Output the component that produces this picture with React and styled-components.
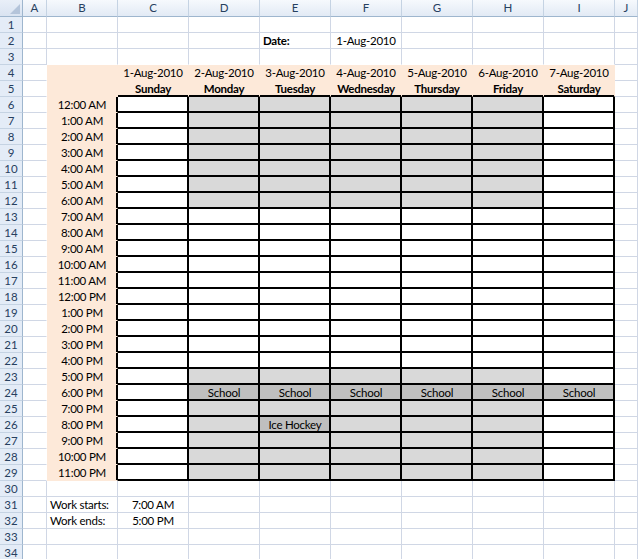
import React from 'react';
import styled, {createGlobalStyle} from 'styled-components';

const GRID = '#d0d7e5'
const PEACH = '#fde9d9'
const GRAY = '#d9d9d9'
const DARK = '#bfbfbf'
const HEAD_LINE = '#9eb6ce'

const GlobalStyle = createGlobalStyle`
  html, body {
    margin: 0;
    padding: 0;
    background: #fff;
    overflow: hidden;
  }
  body {
    font-family: Lato, "Liberation Sans", sans-serif;
  }
`

const Sheet = styled.div`
  display: grid;
  grid-template-columns: 23px 24px repeat(8, 71px) 1fr;
  grid-template-rows: 17px repeat(34, 16px);
  width: 638px;
  height: 559px;
  overflow: hidden;
  font-size: 11.5px;
  letter-spacing: -0.25px;
  color: #000;
`
const Corner = styled.div`
  box-sizing: border-box;
  display: flex;
  align-items: flex-end;
  justify-content: flex-end;
  padding: 0 2px 2px 0;
  background: linear-gradient(#e9eff8, #d9e3f1);
  border-right: 1px solid ${HEAD_LINE};
  border-bottom: 1px solid ${HEAD_LINE};
`
const ColHead = styled.div`
  box-sizing: border-box;
  background: linear-gradient(#f6f9fd, #e2eaf5);
  border-right: 1px solid #c5d3e3;
  border-bottom: 1px solid ${HEAD_LINE};
  color: #27405f;
  text-align: center;
  line-height: 16px;
  letter-spacing: 0;
`
const RowHead = styled.div`
  box-sizing: border-box;
  background: #e4ecf7;
  border-right: 1px solid ${HEAD_LINE};
  border-bottom: 1px solid #c5d3e3;
  color: #27405f;
  text-align: center;
  line-height: 15px;
  letter-spacing: 0;
`
const Cell = styled.div`
  box-sizing: border-box;
  padding: 0 3px;
  line-height: 15px;
  white-space: nowrap;
  overflow: hidden;
  background: ${p => p.$fill};
  border-right: 1px solid ${p => p.$right};
  border-bottom: 1px solid ${p => p.$bottom};
  box-shadow: ${p => p.$shadow};
  text-align: ${p => p.$align};
  font-weight: ${p => (p.$bold ? 700 : 400)};
`

const dates = ['1-Aug-2010', '2-Aug-2010', '3-Aug-2010', '4-Aug-2010', '5-Aug-2010', '6-Aug-2010', '7-Aug-2010']
const days = ['Sunday', 'Monday', 'Tuesday', 'Wednesday', 'Thursday', 'Friday', 'Saturday']
const COLS = ['A', 'B', 'C', 'D', 'E', 'F', 'G', 'H', 'I', 'J']

const boxed = (r, c) => r >= 6 && r <= 29 && c >= 2 && c <= 8

const timeLabel = r => {
  const h = r - 6
  return `${h % 12 || 12}:00 ${h < 12 ? 'AM' : 'PM'}`
}

// what each cell holds: fill, text, alignment, weight
const cellInfo = (r, c) => {
  let fill = null, text = '', align = 'left', bold = false
  if ((r === 4 || r === 5) && c >= 1 && c <= 8) fill = PEACH
  if (r >= 6 && r <= 29 && c === 1) {
    fill = PEACH
    text = timeLabel(r)
    align = 'center'
  }
  if (r === 4 && c >= 2 && c <= 8) { text = dates[c - 2]; align = 'center' }
  if (r === 5 && c >= 2 && c <= 8) { text = days[c - 2]; align = 'center'; bold = true }
  if (r === 2 && c === 4) { text = 'Date:'; bold = true }
  if (r === 2 && c === 5) { text = '1-Aug-2010'; align = 'center' }
  if (r === 31 && c === 1) text = 'Work starts:'
  if (r === 32 && c === 1) text = 'Work ends:'
  if (r === 31 && c === 2) { text = '7:00 AM'; align = 'center' }
  if (r === 32 && c === 2) { text = '5:00 PM'; align = 'center' }
  if (boxed(r, c)) {
    if (r === 24 && c >= 3) {
      fill = DARK
      text = 'School'
      align = 'center'
    } else if (r === 26 && c === 4) {
      fill = DARK
      text = 'Ice Hockey'
      align = 'center'
    } else if (c >= 3 && c <= 7 && ((r >= 6 && r <= 12) || (r >= 23 && r <= 29))) {
      fill = GRAY
    }
  }
  return {fill, text, align, bold}
}

const lineColor = (own, other, black) => {
  if (black) return '#000'
  if (own) return own
  if (other) return '#fff'
  return GRID
}

const renderCell = (r, c) => {
  const info = cellInfo(r, c)
  const rightBlack = boxed(r, c) || boxed(r, c + 1)
  const bottomBlack = boxed(r, c) || boxed(r + 1, c)
  const shadows = []
  if (rightBlack) shadows.push('inset -1px 0 0 #000')
  if (bottomBlack) shadows.push('inset 0 -1px 0 #000')
  return (
    <Cell
      key={`${r}-${c}`}
      $fill={info.fill || '#fff'}
      $right={lineColor(info.fill, cellInfo(r, c + 1).fill, rightBlack)}
      $bottom={lineColor(info.fill, cellInfo(r + 1, c).fill, bottomBlack)}
      $shadow={shadows.length ? shadows.join(', ') : 'none'}
      $align={info.align}
      $bold={info.bold}
    >
      {info.text}
    </Cell>
  )
}

const App = () => {
  const rows = Array.from({length: 34}, (_, i) => i + 1)
  return (
    <>
      <GlobalStyle/>
      <Sheet>
        <Corner>
          <svg width="10" height="10" viewBox="0 0 10 10">
            <polygon points="10,0 10,10 0,10" fill="#b4c4da"/>
          </svg>
        </Corner>
        {COLS.map(col => <ColHead key={col}>{col}</ColHead>)}
        {rows.map(r => (
          <React.Fragment key={r}>
            <RowHead>{r}</RowHead>
            {COLS.map((_, c) => renderCell(r, c))}
          </React.Fragment>
        ))}
      </Sheet>
    </>
  );
};

export default App;
